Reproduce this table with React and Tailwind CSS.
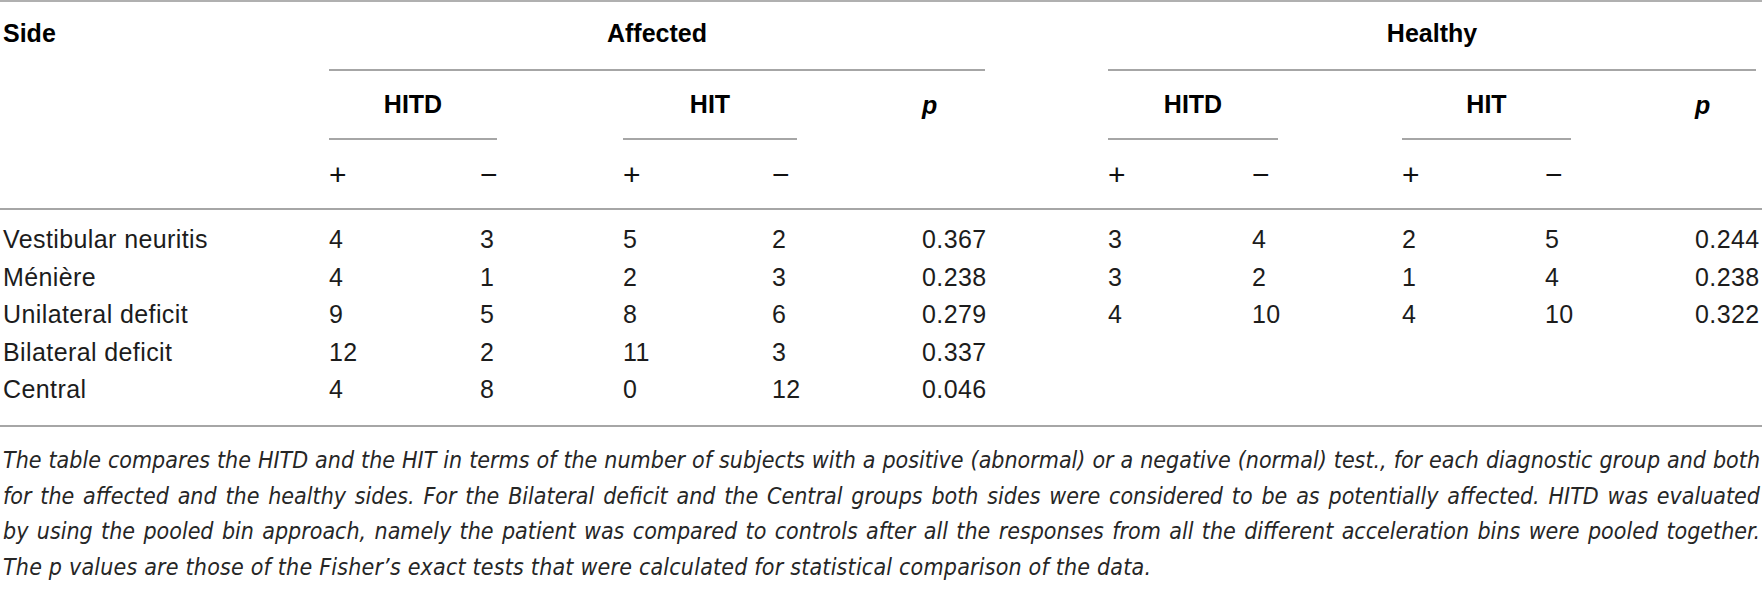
// Table: HITD vs HIT per diagnostic group, affected and healthy sides
const cols = 'grid grid-cols-[329px_151px_143px_149px_150px_186px_144px_150px_143px_150px_1fr]'

const rows = [
  ['Vestibular neuritis', '4', '3', '5', '2', '0.367', '3', '4', '2', '5', '0.244'],
  ['Ménière', '4', '1', '2', '3', '0.238', '3', '2', '1', '4', '0.238'],
  ['Unilateral deficit', '9', '5', '8', '6', '0.279', '4', '10', '4', '10', '0.322'],
  ['Bilateral deficit', '12', '2', '11', '3', '0.337', '', '', '', '', ''],
  ['Central', '4', '8', '0', '12', '0.046', '', '', '', '', ''],
]

// lines 1-3 are stretched to the full measure, the last one is left ragged
const caption = [
  'The table compares the HITD and the HIT in terms of the number of subjects with a positive (abnormal) or a negative (normal) test., for each diagnostic group and both',
  'for the affected and the healthy sides. For the Bilateral deficit and the Central groups both sides were considered to be as potentially affected. HITD was evaluated',
  'by using the pooled bin approach, namely the patient was compared to controls after all the responses from all the different acceleration bins were pooled together.',
]

function SubHead({ span = 'col-span-2', width, children }) {
  return (
    <div className={`${span} h-[69px]`}>
      <div className={`${width} h-full border-b-2 border-[#a6a6a6] flex items-center justify-center`}>{children}</div>
    </div>
  )
}

function Sign({ children }) {
  return <div className="h-[68px] flex items-center text-[30px] font-normal text-[#111]">{children}</div>
}

export default function App() {
  return (
    <div className="w-[1762px] h-[598px] bg-white overflow-hidden font-['Liberation_Sans',Arial,sans-serif] text-[#1c1c1c]">
      <div className="border-t-2 border-[#b0b0b0]">
        {/* header: three tiers */}
        <div className={`${cols} border-b-2 border-[#a6a6a6] font-bold text-[25px] text-black`}>
          <div className="row-span-3">
            <div className="h-[67px] flex items-center pl-[3px] pb-1">Side</div>
          </div>
          <SubHead span="col-span-5" width="w-[656px]">
            <span className="pb-1">Affected</span>
          </SubHead>
          <SubHead span="col-span-5" width="w-[648px]">
            <span className="pb-1">Healthy</span>
          </SubHead>

          <SubHead width="w-[168px]">HITD</SubHead>
          <SubHead width="w-[174px]">HIT</SubHead>
          <div className="h-[69px] flex items-center italic">p</div>
          <SubHead width="w-[170px]">HITD</SubHead>
          <SubHead width="w-[169px]">HIT</SubHead>
          <div className="h-[69px] flex items-center italic">p</div>

          <Sign>+</Sign>
          <Sign>−</Sign>
          <Sign>+</Sign>
          <Sign>−</Sign>
          <div />
          <Sign>+</Sign>
          <Sign>−</Sign>
          <Sign>+</Sign>
          <Sign>−</Sign>
          <div />
        </div>

        {/* body */}
        <div className="pt-[11px] pb-[16.5px] border-b-2 border-[#a6a6a6] text-[25px] tracking-[0.4px]">
          {rows.map((r) => (
            <div key={r[0]} className={`${cols} h-[37.5px] items-center`}>
              {r.map((c, i) => (
                <div key={i} className={i === 0 ? 'pl-[3px]' : ''}>{c}</div>
              ))}
            </div>
          ))}
        </div>

        {/* note */}
        <div className="pt-[16px] pl-[3px] italic text-[23px] leading-[35.5px] text-[#262626] font-['Liberation_Sans_Narrow','DejaVu_Sans_Condensed','Liberation_Sans',sans-serif]">
          {caption.map((l, i) => (
            <div key={i} className="w-[1757px] text-justify [text-align-last:justify]">{l}</div>
          ))}
          <div className="whitespace-nowrap tracking-[0.2px]">
            The p values are those of the Fisher’s exact tests that were calculated for statistical comparison of the data.
          </div>
        </div>
      </div>
    </div>
  )
}
